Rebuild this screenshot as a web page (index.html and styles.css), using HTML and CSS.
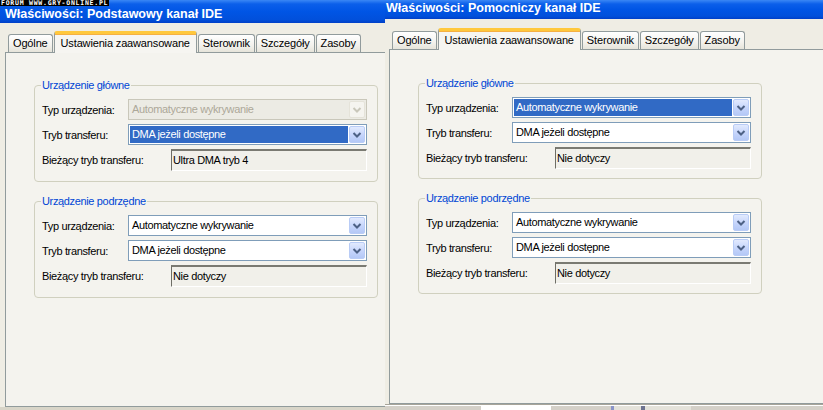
FILE: index.html
```html
<!DOCTYPE html>
<html lang="pl">
<head>
    <meta charset="UTF-8">
    <title>Właściwości kanału IDE</title>
    <link rel="stylesheet" href="styles.css">
</head>
<body>
    <div class="watermark">FORUM WWW.GRY-ONLINE.PL</div>
    <div class="desktop">
        <div class="window window-left">
            <div class="titlebar">Właściwości: Podstawowy kanał IDE</div>
            <div class="dialog">
                <div class="tabs">
                    <div class="tab">Ogólne</div>
                    <div class="tab tab-active">Ustawienia zaawansowane</div>
                    <div class="tab">Sterownik</div>
                    <div class="tab">Szczegóły</div>
                    <div class="tab">Zasoby</div>
                </div>
                <div class="pane">
                    <fieldset class="group">
                        <legend>Urządzenie główne</legend>
                        <div class="row">
                            <span class="label">Typ urządzenia:</span>
                            <div class="combo combo-disabled">
                                <span class="combo-value">Automatyczne wykrywanie</span>
                                <span class="combo-button"><svg width="16" height="17" viewBox="0 0 16 17"><polyline points="4.5,7 8,10.5 11.5,7" /></svg></span>
                            </div>
                        </div>
                        <div class="row">
                            <span class="label">Tryb transferu:</span>
                            <div class="combo combo-selected">
                                <span class="combo-value">DMA jeżeli dostępne</span>
                                <span class="combo-button"><svg width="16" height="17" viewBox="0 0 16 17"><polyline points="4.5,7 8,10.5 11.5,7" /></svg></span>
                            </div>
                        </div>
                        <div class="row">
                            <span class="label label-wide">Bieżący tryb transferu:</span>
                            <div class="readonly">Ultra DMA tryb 4</div>
                        </div>
                    </fieldset>
                    <fieldset class="group">
                        <legend>Urządzenie podrzędne</legend>
                        <div class="row">
                            <span class="label">Typ urządzenia:</span>
                            <div class="combo">
                                <span class="combo-value">Automatyczne wykrywanie</span>
                                <span class="combo-button"><svg width="16" height="17" viewBox="0 0 16 17"><polyline points="4.5,7 8,10.5 11.5,7" /></svg></span>
                            </div>
                        </div>
                        <div class="row">
                            <span class="label">Tryb transferu:</span>
                            <div class="combo">
                                <span class="combo-value">DMA jeżeli dostępne</span>
                                <span class="combo-button"><svg width="16" height="17" viewBox="0 0 16 17"><polyline points="4.5,7 8,10.5 11.5,7" /></svg></span>
                            </div>
                        </div>
                        <div class="row">
                            <span class="label label-wide">Bieżący tryb transferu:</span>
                            <div class="readonly">Nie dotyczy</div>
                        </div>
                    </fieldset>
                </div>
            </div>
        </div>

        <div class="right-column">
            <div class="window window-right">
                <div class="titlebar">Właściwości: Pomocniczy kanał IDE</div>
                <div class="dialog">
                    <div class="tabs">
                        <div class="tab">Ogólne</div>
                        <div class="tab tab-active">Ustawienia zaawansowane</div>
                        <div class="tab">Sterownik</div>
                        <div class="tab">Szczegóły</div>
                        <div class="tab">Zasoby</div>
                    </div>
                    <div class="pane">
                        <fieldset class="group">
                            <legend>Urządzenie główne</legend>
                            <div class="row">
                                <span class="label">Typ urządzenia:</span>
                                <div class="combo combo-selected">
                                    <span class="combo-value">Automatyczne wykrywanie</span>
                                    <span class="combo-button"><svg width="16" height="17" viewBox="0 0 16 17"><polyline points="4.5,7 8,10.5 11.5,7" /></svg></span>
                                </div>
                            </div>
                            <div class="row">
                                <span class="label">Tryb transferu:</span>
                                <div class="combo">
                                    <span class="combo-value">DMA jeżeli dostępne</span>
                                    <span class="combo-button"><svg width="16" height="17" viewBox="0 0 16 17"><polyline points="4.5,7 8,10.5 11.5,7" /></svg></span>
                                </div>
                            </div>
                            <div class="row">
                                <span class="label label-wide">Bieżący tryb transferu:</span>
                                <div class="readonly">Nie dotyczy</div>
                            </div>
                        </fieldset>
                        <fieldset class="group">
                            <legend>Urządzenie podrzędne</legend>
                            <div class="row">
                                <span class="label">Typ urządzenia:</span>
                                <div class="combo">
                                    <span class="combo-value">Automatyczne wykrywanie</span>
                                    <span class="combo-button"><svg width="16" height="17" viewBox="0 0 16 17"><polyline points="4.5,7 8,10.5 11.5,7" /></svg></span>
                                </div>
                            </div>
                            <div class="row">
                                <span class="label">Tryb transferu:</span>
                                <div class="combo">
                                    <span class="combo-value">DMA jeżeli dostępne</span>
                                    <span class="combo-button"><svg width="16" height="17" viewBox="0 0 16 17"><polyline points="4.5,7 8,10.5 11.5,7" /></svg></span>
                                </div>
                            </div>
                            <div class="row">
                                <span class="label label-wide">Bieżący tryb transferu:</span>
                                <div class="readonly">Nie dotyczy</div>
                            </div>
                        </fieldset>
                    </div>
                </div>
            </div>
            <div class="strip">
                <div class="strip-field"></div>
                <div class="strip-icons"></div>
            </div>
        </div>
    </div>
</body>
</html>
```

FILE: styles.css
```css
body {
    margin: 0;
    height: 410px;
    overflow: hidden;
    background: #ECE9D8;
    font-family: "Liberation Sans", Arial, sans-serif;
    font-size: 11px;
    letter-spacing: -0.35px;
    color: #000;
}
.watermark {
    position: absolute;
    top: 0;
    left: 0;
    z-index: 5;
    height: 6px;
    padding: 0 1px;
    background: #000;
    color: #fff;
    font-family: "DejaVu Sans Mono", monospace;
    font-size: 6.5px;
    font-weight: bold;
    line-height: 6px;
    letter-spacing: 0.75px;
}
.desktop {
    display: flex;
    height: 410px;
}
.window {
    display: flex;
    flex-direction: column;
    background: #EFEDE4;
    overflow: hidden;
}
.window-left {
    width: 385px;
    height: 410px;
    box-sizing: border-box;
    border-bottom: 3px solid #D8D5C8;
}
.right-column {
    flex: 1;
    min-width: 0;
    display: flex;
    flex-direction: column;
}
.window-right {
    height: 405px;
    box-sizing: border-box;
    border-bottom: 1px solid #A8A59A;
}
.titlebar {
    height: 23px;
    box-sizing: border-box;
    padding: 7px 0 0 5px;
    color: #fff;
    font-size: 12.5px;
    font-weight: bold;
    line-height: 14px;
    letter-spacing: 0;
    white-space: nowrap;
    background: linear-gradient(#3A87F5 0, #0B5FEA 4px, #0055E5 50%, #0150DB 85%, #0040C8 100%);
}
.window-right .titlebar {
    height: 19px;
    padding: 2px 0 0 1px;
    line-height: 13px;
}
.dialog {
    flex: 1;
    display: flex;
    flex-direction: column;
    padding: 8px 0 0 5px;
}
.window-right .dialog {
    padding: 9px 0 0 4px;
}
.tabs {
    display: flex;
    align-items: flex-end;
    padding-left: 3px;
    letter-spacing: -0.15px;
}
.tab {
    height: 18px;
    box-sizing: border-box;
    margin-right: 1px;
    padding: 2px 4px 0 4px;
    border: 1px solid #919B9C;
    border-bottom: none;
    border-radius: 3px 3px 0 0;
    background: linear-gradient(#FFFFFF, #F3F2ED 60%, #E6E4DA);
    white-space: nowrap;
}
.tab-active {
    position: relative;
    z-index: 2;
    height: 22px;
    margin: 0 1px -1px 0;
    padding: 3px 6px 0 6px;
    border-top: 3px solid #FFC83C;
    background: #F6F5F1;
    box-shadow: inset 0 1px 0 #F5B042;
}
.pane {
    flex: 1;
    padding: 26px 0 0 28px;
    border: 1px solid #919B9C;
    border-right: none;
    background: #F4F3EE;
}
.window-right .pane {
    padding-top: 27px;
}
.group {
    width: 344px;
    box-sizing: border-box;
    margin: 0 0 13px 0;
    padding: 7px 10px 10px 7px;
    border: 1px solid #D0D0BF;
    border-radius: 4px;
}
.window-right .group {
    padding-bottom: 9px;
}
.group legend {
    margin-left: -1px;
    padding: 0 1px;
    color: #0046D5;
    line-height: 13px;
}
.row {
    display: flex;
    align-items: center;
    margin-bottom: 4px;
}
.row:last-child {
    margin-bottom: 0;
}
.label {
    width: 86px;
    flex: none;
}
.label-wide {
    width: 129px;
}
.combo {
    flex: 1;
    display: flex;
    align-items: center;
    height: 21px;
    box-sizing: border-box;
    padding: 1px;
    border: 1px solid #7F9DB9;
    background: #fff;
}
.combo-value {
    flex: 1;
    height: 17px;
    margin-right: 1px;
    padding-left: 2px;
    line-height: 17px;
    white-space: nowrap;
}
.combo-selected .combo-value {
    background: #316AC5;
    color: #fff;
}
.combo-button {
    width: 16px;
    height: 17px;
    box-sizing: border-box;
    border: 1px solid #B9CCF6;
    border-radius: 2px;
    background: linear-gradient(#E2EAFE, #C3D3FB 60%, #B4C8F6);
}
.combo-button svg {
    display: block;
    margin: -1px;
}
.combo-button polyline {
    fill: none;
    stroke: #4D6185;
    stroke-width: 2;
}
.combo-disabled {
    border-color: #C9C7BA;
    background: #ECEBE4;
    color: #ACA899;
}
.combo-disabled .combo-button {
    border-color: #E5E3D9;
    background: #F5F4EF;
}
.combo-disabled polyline {
    stroke: #C9C7BA;
}
.readonly {
    flex: 1;
    height: 22px;
    box-sizing: border-box;
    padding-left: 1px;
    border-style: solid;
    border-width: 2px 1px 1px 1px;
    border-color: #7A7A72 #FFFFFF #FFFFFF #6E6E66;
    background: #F1F0EA;
    line-height: 19px;
}
.strip {
    flex: 1;
    display: flex;
    border-top: 1px solid #FFFFFF;
    background: #D4D0C8;
}
.strip-field {
    width: 70px;
    margin-left: 96px;
    background: #FFFFFF;
}
.strip-icons {
    width: 80px;
    margin-left: 60px;
    background: linear-gradient(90deg, #8B94C8 0 3px, #E4E2DA 3px 30px, #6E7390 30px 34px, #E4E2DA 34px);
}
```
